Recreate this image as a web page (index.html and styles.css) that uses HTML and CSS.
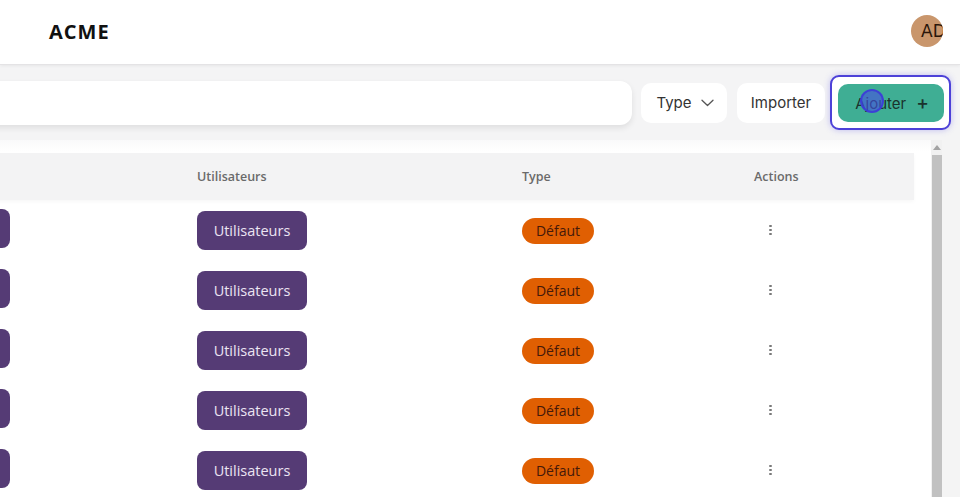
FILE: index.html
```html
<!DOCTYPE html>
<html lang="fr">
<head>
<meta charset="utf-8">
<title>ACME</title>
<link rel="stylesheet" href="styles.css">
</head>
<body>
<header class="topbar">
  <div class="brand">ACME</div>
  <div class="avatar"><span>AD</span></div>
</header>

<section class="toolbar">
  <div class="search"></div>
  <button class="btn btn-type">Type
    <svg class="chev" width="13" height="8" viewBox="0 0 13 8"><path d="M1 1.2l5.5 5.3L12 1.2" fill="none" stroke="#555" stroke-width="1.3" stroke-linecap="round" stroke-linejoin="round"/></svg>
  </button>
  <button class="btn btn-import">Importer</button>
  <div class="focus-ring">
    <button class="btn-primary">Ajouter <span class="plus">+</span></button>
    <span class="cursor"></span>
  </div>
</section>

<main class="content">
  <div class="table-wrap">
    <div class="table">
      <div class="row head">
        <div class="cell c1"></div>
        <div class="cell">Utilisateurs</div>
        <div class="cell">Type</div>
        <div class="cell">Actions</div>
      </div>
      <div class="row">
        <div class="cell c1"><span class="tag"></span></div>
        <div class="cell"><span class="tag">Utilisateurs</span></div>
        <div class="cell"><span class="pill">Défaut</span></div>
        <div class="cell"><span class="kebab"><i></i><i></i><i></i></span></div>
      </div>
      <div class="row">
        <div class="cell c1"><span class="tag"></span></div>
        <div class="cell"><span class="tag">Utilisateurs</span></div>
        <div class="cell"><span class="pill">Défaut</span></div>
        <div class="cell"><span class="kebab"><i></i><i></i><i></i></span></div>
      </div>
      <div class="row">
        <div class="cell c1"><span class="tag"></span></div>
        <div class="cell"><span class="tag">Utilisateurs</span></div>
        <div class="cell"><span class="pill">Défaut</span></div>
        <div class="cell"><span class="kebab"><i></i><i></i><i></i></span></div>
      </div>
      <div class="row">
        <div class="cell c1"><span class="tag"></span></div>
        <div class="cell"><span class="tag">Utilisateurs</span></div>
        <div class="cell"><span class="pill">Défaut</span></div>
        <div class="cell"><span class="kebab"><i></i><i></i><i></i></span></div>
      </div>
      <div class="row">
        <div class="cell c1"><span class="tag"></span></div>
        <div class="cell"><span class="tag">Utilisateurs</span></div>
        <div class="cell"><span class="pill">Défaut</span></div>
        <div class="cell"><span class="kebab"><i></i><i></i><i></i></span></div>
      </div>
    </div>
  </div>
  <div class="scrollbar">
    <div class="arrow"></div>
    <div class="thumb"></div>
  </div>
  <div class="gutter"></div>
</main>
</body>
</html>
```

FILE: styles.css
```css
* { box-sizing: border-box; }
html, body { margin: 0; padding: 0; }
body {
  width: 960px;
  height: 497px;
  overflow: hidden;
  background: #f4f4f5;
  font-family: "Open Sans", "Noto Sans", sans-serif;
  color: #222;
}

.topbar {
  height: 65px;
  background: #fff;
  display: flex;
  align-items: center;
  justify-content: space-between;
  padding: 0 17px 2px 49px;
  border-bottom: 1px solid #e4e3e5;
  box-shadow: 0 1px 3px rgba(0,0,0,0.06);
  position: relative;
  z-index: 2;
}
.brand {
  font-family: "Open Sans", sans-serif;
  font-weight: 700;
  font-size: 20px;
  letter-spacing: 1px;
  color: #111;
}
.avatar {
  width: 32px;
  height: 32px;
  border-radius: 50%;
  background: #c9966c;
  overflow: hidden;
  display: flex;
  align-items: center;
  padding-left: 10px;
  white-space: nowrap;
}
.avatar span {
  font-family: "DejaVu Sans", sans-serif;
  font-size: 17px;
  color: #2a160a;
}

.toolbar {
  height: 75px;
  display: flex;
  align-items: center;
  margin-left: -100px;
  width: 1100px;
  background: #f4f4f5;
}
.search {
  flex: 0 0 732px;
  height: 44px;
  background: #fff;
  border-radius: 0 12px 12px 0;
  box-shadow: 0 3px 6px rgba(0,0,0,0.09);
  margin-right: 9px;
}
.btn {
  flex: 0 0 auto;
  height: 40px;
  border: none;
  background: #fff;
  border-radius: 10px;
  font-family: "Inter", "Open Sans", sans-serif;
  font-size: 15px;
  color: #333;
  display: flex;
  align-items: center;
  justify-content: center;
}
.btn-type { width: 86px; gap: 9px; padding: 0 0 0 2px; margin-right: 10px; }
.btn-import { width: 88px; margin-right: 5px; }
.chev { margin-top: 1px; }

.focus-ring {
  position: relative;
  flex: 0 0 auto;
  border: 2px solid #4d41d8;
  border-radius: 9px;
  padding: 7px 5px 6px 6px;
  background: #fff;
  box-shadow: 0 0 6px rgba(90,80,230,0.35);
}
.btn-primary {
  display: flex;
  align-items: center;
  justify-content: center;
  gap: 10px;
  width: 106px;
  height: 38px;
  border: none;
  border-radius: 10px;
  background: #3fae94;
  font-family: "Inter", "Open Sans", sans-serif;
  font-size: 15px;
  color: #1a332d;
  padding: 0 0 0 2px;
}
.plus { font-size: 19px; font-weight: 500; line-height: 1; margin-top: -2px; }
.cursor {
  position: absolute;
  left: 28px;
  top: 12px;
  width: 24px;
  height: 24px;
  border-radius: 50%;
  background: rgba(70,80,225,0.62);
  border: 2px solid rgba(60,60,215,0.9);
}

.content {
  height: 357px;
  display: flex;
  background: #fff;
}
.table-wrap {
  flex: 0 0 931px;
  overflow: hidden;
  padding-top: 13px;
  background: linear-gradient(#f9f9fa, #fff 12px);
}
.table {
  width: 1114px;
  margin-left: -200px;
}
.row {
  display: grid;
  grid-template-columns: 397px 325px 232px 160px;
  height: 60px;
  align-items: center;
}
.row.head {
  height: 47px;
  background: #f3f3f4;
  box-shadow: 0 2px 4px rgba(0,0,0,0.03);
}
.head .cell {
  font-size: 12.5px;
  font-weight: 600;
  color: #6a6a6a;
}
.c1 { padding-left: 100px; }
.tag {
  display: inline-flex;
  align-items: center;
  justify-content: center;
  width: 110px;
  height: 39px;
  border-radius: 8px;
  background: #553b75;
  color: #ebe4f2;
  font-size: 14.5px;
  margin-top: 1px;
}
.pill {
  display: inline-flex;
  align-items: center;
  justify-content: center;
  width: 72px;
  height: 26px;
  border-radius: 13px;
  background: #e05f02;
  color: #45190a;
  font-size: 14px;
  margin-top: 1px;
}
.kebab {
  display: flex;
  flex-direction: column;
  gap: 1.5px;
  margin-left: 15px;
  width: 3px;
}
.kebab i {
  display: block;
  width: 2.5px;
  height: 2.5px;
  border-radius: 50%;
  background: #7a7a7a;
}

.scrollbar {
  flex: 0 0 11px;
  display: flex;
  flex-direction: column;
  align-items: center;
  background: #f1f1f1;
  padding-top: 5px;
}
.arrow {
  width: 0;
  height: 0;
  border-left: 4px solid transparent;
  border-right: 4px solid transparent;
  border-bottom: 5px solid #a3a3a3;
  margin-bottom: 5px;
}
.thumb {
  width: 10px;
  flex: 1;
  background: #c1c1c1;
}
.gutter {
  flex: 1;
  background: #f4f4f4;
}
```
